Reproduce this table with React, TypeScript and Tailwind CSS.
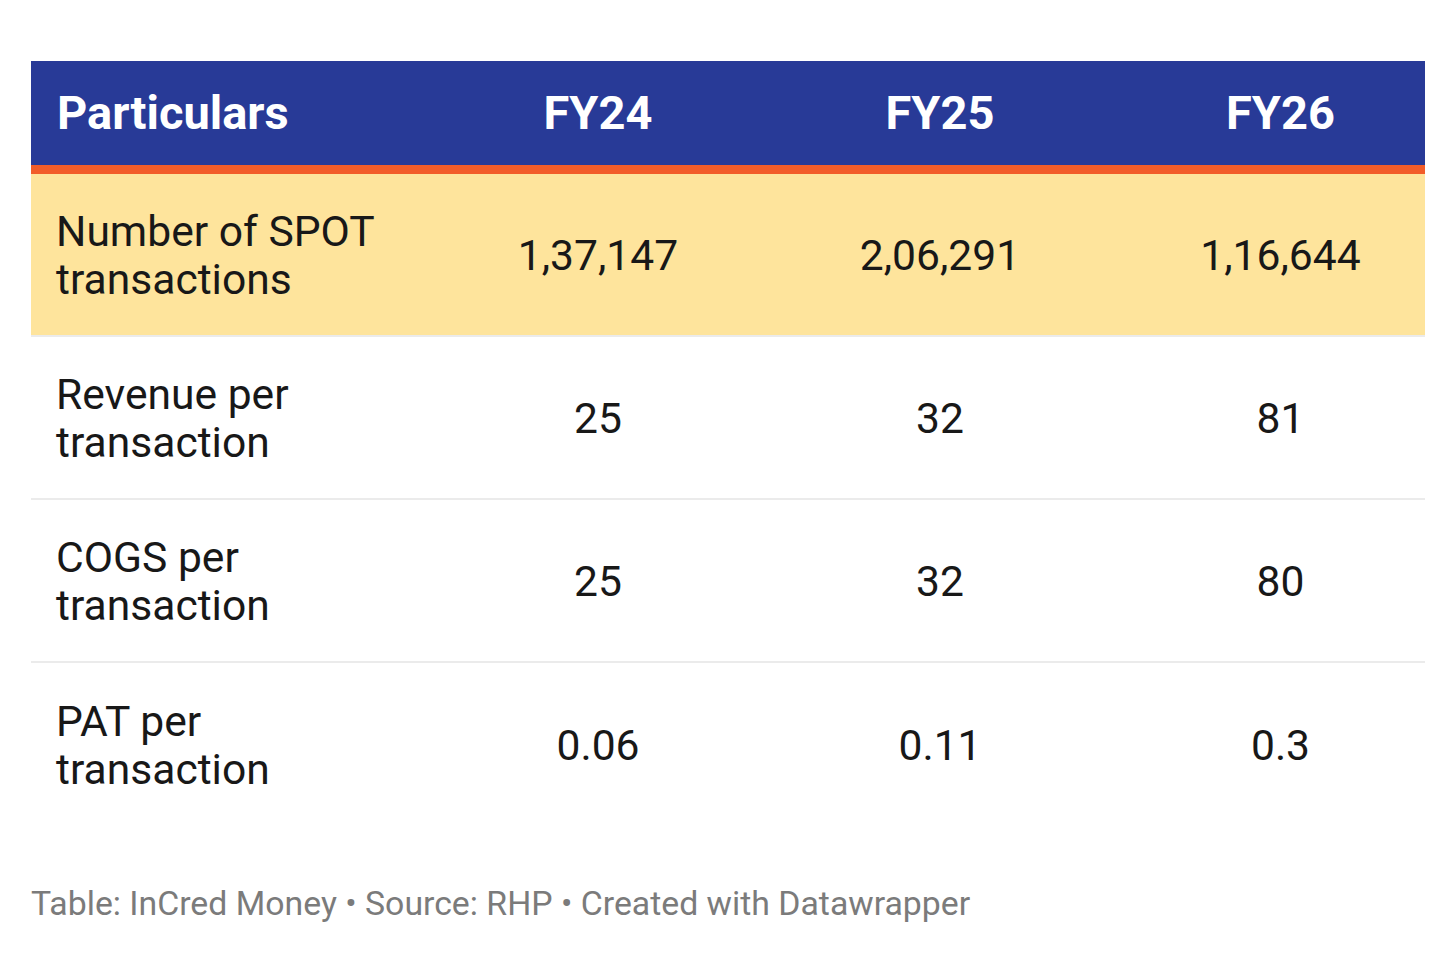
const rows = [
  { label: ["Number of SPOT", "transactions"], values: ["1,37,147", "2,06,291", "1,16,644"], highlight: true },
  { label: ["Revenue per", "transaction"], values: ["25", "32", "81"] },
  { label: ["COGS per", "transaction"], values: ["25", "32", "80"] },
  { label: ["PAT per", "transaction"], values: ["0.06", "0.11", "0.3"], last: true },
];

const cols = "grid grid-cols-[396px_342px_342px_1fr]";

export default function App() {
  return (
    <div className="min-h-[955px] bg-white px-[31px] pt-[61px] font-['Roboto',sans-serif] text-[#181818]">
      <div className={`${cols} h-[104px] items-center bg-[#283a97] text-[47px] font-bold text-white`}>
        <div className="pl-[26px]">Particulars</div>
        <div className="text-center">FY24</div>
        <div className="text-center">FY25</div>
        <div className="pl-[25px] text-center">FY26</div>
      </div>
      <div className="h-[9px] bg-[#f25c29]" />

      {rows.map((r) => (
        <div
          key={r.label.join(" ")}
          className={`${cols} h-[163px] items-center text-[42.6px] leading-[48px] ${
            r.highlight ? "bg-[#fee49c]" : ""
          } ${r.last ? "" : "border-b-2 border-[#ebebeb]"}`}
        >
          <div className="pl-[25px]">
            {r.label[0]}
            <br />
            {r.label[1]}
          </div>
          <div className="text-center">{r.values[0]}</div>
          <div className="text-center">{r.values[1]}</div>
          <div className="pl-[25px] text-center">{r.values[2]}</div>
        </div>
      ))}

      <div className="mt-[53px] text-[33.8px] text-[#7b7b7b]">
        Table: InCred Money • Source: RHP • Created with Datawrapper
      </div>
    </div>
  );
}
